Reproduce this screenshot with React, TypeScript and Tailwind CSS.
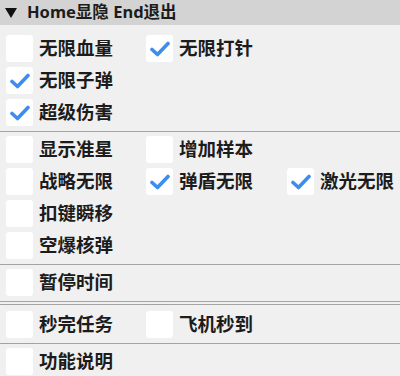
import type { ReactNode } from "react";

type Item = { label: string; checked?: boolean };

const sections: Item[][][] = [
  [
    [{ label: "无限血量" }, { label: "无限打针", checked: true }],
    [{ label: "无限子弹", checked: true }],
    [{ label: "超级伤害", checked: true }],
  ],
  [
    [{ label: "显示准星" }, { label: "增加样本" }],
    [{ label: "战略无限" }, { label: "弹盾无限", checked: true }, { label: "激光无限", checked: true }],
    [{ label: "扣键瞬移" }],
    [{ label: "空爆核弹" }],
  ],
  [[{ label: "暂停时间" }]],
  [[{ label: "秒完任务" }, { label: "飞机秒到" }]],
  [[{ label: "功能说明" }]],
];

function CheckBox({ label, checked }: Item) {
  return (
    <div className="flex h-[27px] items-center">
      <div className="flex h-[27px] w-[27px] shrink-0 items-center justify-center rounded-[3px] bg-white">
        {checked && (
          <svg width="22" height="16" viewBox="0 0 22 16">
            <path
              d="M3 8.5 L8.5 13.5 L19 2.5"
              fill="none"
              stroke="#3b8df0"
              strokeWidth="3.6"
              strokeLinecap="round"
              strokeLinejoin="round"
            />
          </svg>
        )}
      </div>
      <span className="ml-[6px] whitespace-nowrap text-[18.5px] font-bold leading-none text-[#1c1c1c]">{label}</span>
    </div>
  );
}

function Line({ className = "" }: { className?: string }) {
  return <div className={"h-px w-full bg-[#a3a3a3] " + className} />;
}

function Section({ rows }: { rows: Item[][] }) {
  return (
    <div className="flex flex-col gap-[5px] pl-[6px]">
      {rows.map((row, i) => (
        <div key={i} className="flex">
          {row.map((it, j) => (
            <div key={j} className={j === 0 ? "w-[140px] shrink-0" : "w-[141px] shrink-0"}>
              <CheckBox {...it} />
            </div>
          ))}
        </div>
      ))}
    </div>
  );
}

function Sep({ children }: { children?: ReactNode }) {
  return <div className="mb-[4px] mt-[5px]">{children ?? <Line />}</div>;
}

export default function App() {
  return (
    <div
      className="h-[376px] w-[400px] overflow-hidden bg-[#f0f0f0]"
      style={{ fontFamily: '"Noto Sans", "Noto Sans CJK SC", sans-serif' }}
    >
      <div className="flex h-[25px] items-center bg-[#d3d3d3] pl-[5px]">
        <svg width="12" height="10" viewBox="0 0 12 10" className="mt-[1px]">
          <polygon points="0,0 12,0 6,10" fill="#111" />
        </svg>
        <span className="ml-[10px] whitespace-nowrap text-[16.5px] font-bold leading-none text-[#1c1c1c]">Home显隐 End退出</span>
      </div>
      <div className="pt-[10px]">
        <Section rows={sections[0]} />
        <Sep />
        <Section rows={sections[1]} />
        <Sep />
        <Section rows={sections[2]} />
        <div className="mb-[6px] mt-[5px] flex flex-col gap-[2px]">
          <Line />
          <Line />
        </div>
        <Section rows={sections[3]} />
        <Sep />
        <Section rows={sections[4]} />
      </div>
    </div>
  );
}
